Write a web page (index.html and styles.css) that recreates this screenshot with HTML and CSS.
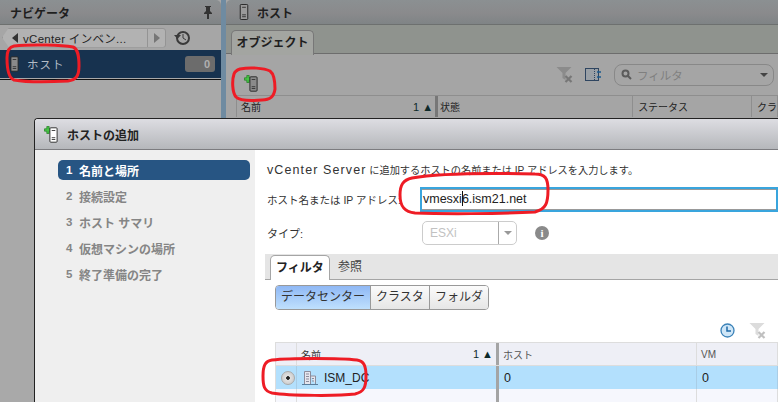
FILE: index.html
```html
<!DOCTYPE html>
<html lang="ja">
<head>
<meta charset="utf-8">
<title>ホストの追加</title>
<link rel="stylesheet" href="styles.css">
</head>
<body>
<svg width="0" height="0" class="defs">
  <defs>
    <symbol id="srv" viewBox="0 0 10 17">
      <rect x="1" y="0.5" width="8" height="16" rx="1" fill="currentColor" stroke="#222"/>
      <path d="M3 3.500h4M3 11.500h4M3 13.500h4" stroke="#333" fill="none"/>
    </symbol>
    <symbol id="plus" viewBox="0 0 8 8">
      <path d="M2.800 .5h2.400v2.300h2.300v2.400H5.200v2.300H2.800V5.200H.5V2.800h2.300z" fill="#46c446" stroke="#1f7d1f" stroke-width=".7"/>
    </symbol>
    <symbol id="funnel" viewBox="0 0 17 17">
      <path d="M0.500 1h15l-6 6v7l-3-2V7z" fill="currentColor" opacity=".55"/>
      <path d="M9.500 10l6 6M15.500 10l-6 6" stroke="currentColor" stroke-width="2.200" fill="none"/>
    </symbol>
  </defs>
</svg>

<div class="app">
  <aside class="nav">
    <header class="pane-head">
      <span class="pane-title">ナビゲータ</span>
      <svg class="pin" width="10" height="13" viewBox="0 0 10 13"><path d="M2 0h6v1H7v4l2 2v1H6v5H4V8H1V7l2-2V1H2z" fill="#333"/></svg>
    </header>
    <div class="crumbs">
      <div class="crumb">
        <span class="arrow-left"></span>
        <span class="crumb-text">vCenter インベン...</span>
        <span class="crumb-next"><span class="arrow-right"></span></span>
      </div>
      <svg class="history" width="17" height="16" viewBox="0 0 17 16"><circle cx="9" cy="8" r="6" fill="none" stroke="#3a3a3a" stroke-width="2"/><path d="M0 5l3.500 4L7 5z" fill="#3a3a3a"/><path d="M9 4v4l3 2" stroke="#3a3a3a" fill="none"/></svg>
    </div>
    <div class="nav-item">
      <svg class="ico-srv" width="9" height="16"><use href="#srv"/></svg>
      <span class="nav-label">ホスト</span>
      <span class="count">0</span>
    </div>
  </aside>
  <div class="splitter"></div>
  <main class="work">
    <header class="pane-head work-head">
      <svg class="ico-work" width="10" height="16"><use href="#srv"/></svg>
      <span class="pane-title">ホスト</span>
    </header>
    <div class="tabs"><span class="tab-object">オブジェクト</span></div>
    <div class="objects">
      <div class="toolbar">
        <span class="add-host">
          <svg class="add-plus" width="8" height="8"><use href="#plus"/></svg>
          <svg class="add-srv" width="9" height="16"><use href="#srv"/></svg>
        </span>
        <svg class="ico-funnel" width="17" height="17"><use href="#funnel"/></svg>
        <svg class="ico-cols" width="17" height="14" viewBox="0 0 17 14"><rect x=".5" y=".5" width="13" height="12" fill="#9aa0a6" stroke="#2f4560"/><path d="M9.500 1v12" stroke="#2f4560" stroke-dasharray="1 1"/><path d="M16 4h-4M16 9h-4" stroke="#1b5b8f" stroke-width="1.500"/></svg>
        <div class="search">
          <svg width="11" height="11" viewBox="0 0 11 11"><circle cx="4.500" cy="4.500" r="3" fill="none" stroke="#5c5c5c" stroke-width="2"/><path d="M7 7l3 3" stroke="#5c5c5c" stroke-width="2"/></svg>
          <span class="search-text">フィルタ</span>
          <span class="search-caret"></span>
        </div>
      </div>
      <div class="obj-cols">
        <span class="oc oc-name">名前<em>1 ▲</em></span>
        <span class="oc oc-state">状態</span>
        <span class="oc oc-status">ステータス</span>
        <span class="oc oc-cl">クラ</span>
      </div>
    </div>
  </main>
</div>

<section class="dialog">
  <header class="dlg-head">
    <span class="add-host">
      <svg class="add-plus" width="8" height="8"><use href="#plus"/></svg>
      <svg class="add-srv light" width="9" height="16"><use href="#srv"/></svg>
    </span>
    <span class="dlg-title">ホストの追加</span>
  </header>
  <div class="dlg-body">
    <ol class="steps">
      <li class="step on"><b>1</b>名前と場所</li>
      <li class="step"><b>2</b>接続設定</li>
      <li class="step"><b>3</b>ホスト サマリ</li>
      <li class="step"><b>4</b>仮想マシンの場所</li>
      <li class="step"><b>5</b>終了準備の完了</li>
    </ol>
    <div class="form">
      <p class="lead"><span class="lat">vCenter Server</span> に追加するホストの名前または IP アドレスを入力します。</p>
      <div class="row-host">
        <label class="lbl">ホスト名または IP アドレス:</label>
        <div class="host-input">vmesxi<i class="cursor"></i>6.ism21.net</div>
      </div>
      <div class="row-type">
        <label class="lbl lbl-type">タイプ:</label>
        <div class="select"><span class="sel-val">ESXi</span><span class="sel-btn"><span class="search-caret light"></span></span></div>
        <span class="info">i</span>
      </div>
      <div class="tabbar">
        <span class="t t-on">フィルタ</span>
        <span class="t">参照</span>
      </div>
      <div class="seg">
        <span class="seg-b seg-on">データセンター</span>
        <span class="seg-b">クラスタ</span>
        <span class="seg-b">フォルダ</span>
      </div>
      <div class="grid-tools">
        <svg width="15" height="15" viewBox="0 0 15 15"><circle cx="7.500" cy="7.500" r="6.500" fill="#cfe6f7" stroke="#3b82b8" stroke-width="1.300"/><path d="M7 3.500V8h4" fill="none" stroke="#1e6aa8" stroke-width="1.500"/></svg>
        <svg class="grid-funnel" width="17" height="17"><use href="#funnel"/></svg>
      </div>
      <div class="grid">
        <div class="g-row g-head">
          <span class="g g0"></span>
          <span class="g g1">名前<em>1 ▲</em></span>
          <span class="g g2">ホスト</span>
          <span class="g g3">VM</span>
        </div>
        <div class="g-row g-sel">
          <span class="g g0"><span class="radio"></span></span>
          <span class="g g1">
            <svg width="16" height="15" viewBox="0 0 16 15"><path d="M2.500 14V1.500h6V14M8.500 6h5V14" fill="#e6e6ee" stroke="#8d8d9c"/><path d="M4 4h3M4 6.500h3M4 9h3M4 11.500h3M10 8.500h2M10 11h2" stroke="#8d8d9c"/><path d="M0 14.500h16" stroke="#5b7f9e"/></svg>
            ISM_DC
          </span>
          <span class="g g2">0</span>
          <span class="g g3">0</span>
        </div>
        <div class="g-row g-empty">
          <span class="g g0"></span><span class="g g1"></span><span class="g g2"></span><span class="g g3"></span>
        </div>
      </div>
    </div>
  </div>
</section>

<svg class="marks" width="778" height="402" viewBox="0 0 778 402">
  <g fill="none" stroke="#ee1c25" stroke-width="3" stroke-linejoin="round">
    <path d="M14 46C32 44 62 45 73 47C78 49 79 56 79 66C79 76 76 80 68 81C50 82 25 82 14 80C9 78 7 70 7 58C7 51 9 47 14 46Z"/>
    <path d="M240 69C250 67 264 68 270 71C274 74 275 82 275 89C274 97 270 100 262 100C250 101 240 101 236 97C232 92 232 80 234 74C235 71 237 70 240 69Z"/>
    <path d="M412 178C440 173 490 173 535 174C545 174 548 178 548 190C548 203 546 209 535 212C500 214 440 214 415 213C404 212 400 206 400 195C400 185 403 180 412 178Z"/>
    <path d="M272 360C290 358 340 358 357 360C364 361 366 366 366 376C366 387 364 392 355 394C340 396 290 396 272 393C264 391 263 386 263 376C263 366 265 361 272 360Z"/>
  </g>
</svg>
</body>
</html>
```
FILE: styles.css
```css
* { box-sizing: border-box; }
html, body { margin: 0; padding: 0; }
body {
  width: 778px; height: 402px; overflow: hidden; position: relative;
  background: #a7a7a7; color: #222;
  font: 12px "Liberation Sans", "Noto Sans CJK JP", sans-serif;
}
.defs { position: absolute; }
em { font-style: normal; }
.app { display: flex; height: 402px; }
.nav { width: 221px; flex: none; background: #a9a9a9; border-top-right-radius: 5px; overflow: hidden; }
.splitter { width: 5px; flex: none; background: #6f8ba1; }
.work { flex: 1; min-width: 0; background: #a5a5a5; border-top-left-radius: 5px; overflow: hidden; }

.pane-head {
  height: 25px; display: flex; align-items: center; padding: 0 8px 0 10px;
  background: linear-gradient(#8b9092, #8a8a8c 55%, #7f8486);
  border-bottom: 1px solid #6d706f;
}
.pane-title { font-weight: 700; font-size: 12px; color: #1f1f1f; }
.pin { margin-left: auto; }

.crumbs { height: 25px; display: flex; align-items: center; padding-left: 2px; background: #a6a6a6; }
.crumb {
  width: 164px; height: 20px; display: flex; align-items: center; position: relative;
  background: #b2b2b2; border: 1px solid #949494; border-radius: 3px; padding-left: 9px;
  clip-path: polygon(7px 0, 100% 0, 100% 100%, 7px 100%, 0 50%);
}
.arrow-left { width: 0; height: 0; border: 5px solid transparent; border-right: 6px solid #333; border-left: 0; }
.crumb-text { margin-left: 5px; font-size: 11.500px; color: #1f1f1f; white-space: nowrap; width: 128px; letter-spacing: .3px; }
.crumb-next { height: 18px; width: 18px; border-left: 1px solid #949494; display: flex; align-items: center; justify-content: center; }
.arrow-right { width: 0; height: 0; border: 5px solid transparent; border-left: 6px solid #767676; border-right: 0; }
.history { margin-left: 8px; }

.nav-item {
  height: 28px; display: flex; align-items: center; padding: 0 6px 0 10px;
  background: #17324f; box-shadow: 0 1px 0 #a9a9a9, 0 2px 0 #111;
}
.ico-srv { color: #8a8a8a; }
.nav-label { margin-left: 8px; color: #b3bcc6; font-size: 11.500px; letter-spacing: 1px; }
.count {
  margin-left: auto; width: 30px; height: 16px; border-radius: 3px;
  background: #6c6c6c; color: #b0b0b0; font-weight: 700; font-size: 11px;
  text-align: right; padding-right: 5px; line-height: 16px;
}

.work-head { padding-left: 13px; gap: 8px; }
.ico-work { color: #9a9a9a; }
.tabs { height: 29px; background: #8f938e; border-bottom: 1px solid #6d6d6d; padding: 5px 0 0 5px; display: flex; }
.tab-object {
  width: 83px; height: 25px; background: #a3a5a1; border: 1px solid #777; border-bottom: 0;
  border-radius: 5px 5px 0 0; font-weight: 700; text-align: center; line-height: 24px; color: #1f1f1f;
}
.objects { padding: 0 0 0 10px; }
.toolbar { height: 41px; display: flex; align-items: center; padding-right: 4px; }
.add-host { position: relative; display: block; width: 14px; height: 17px; flex: none; }
.add-plus { position: absolute; left: 0; top: 0; }
.add-srv { position: absolute; right: 0; bottom: 0; color: #8a8a8a; }
.add-srv.light { color: #fff; }
.toolbar .add-host { margin: 18px 0 0 8px; }
.ico-funnel { margin-left: 298px; color: #777; }
.ico-cols { margin-left: 12px; }
.search {
  margin-left: 12px; width: 160px; height: 22px; border: 1px solid #888; border-radius: 8px;
  display: flex; align-items: center; padding: 0 5px 0 6px; gap: 5px;
}
.search-text { color: #7f7f7f; font-size: 11.500px; }
.search-caret { margin-left: auto; width: 0; height: 0; border: 4px solid transparent; border-top: 4px solid #444; border-bottom: 0; }
.search-caret.light { border-top-color: #999; margin: 0; }
.obj-cols { height: 22px; display: flex; border-top: 1px solid #8e8e8e; border-left: 1px solid #8e8e8e; font-size: 10px; }
.oc { display: flex; align-items: center; padding-left: 5px; border-right: 1px solid #8e8e8e; color: #222; white-space: nowrap; }
.oc-name { width: 203px; justify-content: space-between; padding: 0 2px 0 4px; border-right: 3px solid #777; }
.oc-name em { color: #0e2a2a; font-size: 11px; }
.oc-state { width: 197px; padding-left: 2px; }
.oc-status { width: 120px; }
.oc-cl { flex: 1; }

.dialog {
  position: absolute; left: 34px; top: 118px; width: 744px; height: 284px;
  background: #fff; border: 1px solid #222; border-width: 1px 0 0 1px; border-radius: 4px 0 0 0;
  overflow: hidden;
}
.dlg-head {
  height: 31px; display: flex; align-items: center; padding-left: 9px; gap: 9px;
  background: linear-gradient(#dddde2, #b5b7bb); border-bottom: 1px solid #7c7c80;
}
.dlg-title { font-weight: 700; font-size: 12px; color: #222; }
.dlg-body { display: flex; height: 252px; }
.steps { width: 220px; flex: none; margin: 0; padding: 10px 5px 0 23px; list-style: none; background: #efefef; }
.step { height: 20px; margin-bottom: 6px; padding-left: 8px; display: flex; align-items: center; gap: 6px; font-weight: 700; color: #858585; white-space: nowrap; border-radius: 5px; }
.step b { font-size: 11.500px; width: 7px; }
.step.on { background: #275583; color: #fff; }
.form { flex: 1; min-width: 0; padding: 11px 0 0 12px; font-size: 10.500px; }
.lead { margin: 0; height: 26px; line-height: 18px; color: #333; white-space: nowrap; font-size: 10.200px; }
.lat { font-size: 12.500px; letter-spacing: 1.100px; }
.lbl { color: #333; white-space: nowrap; }
.row-host { display: flex; align-items: center; height: 25px; }
.row-host .lbl { width: 153px; flex: none; }
.host-input {
  flex: 1; height: 25px; border: 2px solid #39a5dd; box-shadow: inset 0 1px 0 #999, inset 0 -1px 0 #999;
  padding-left: 1px; line-height: 21px; font-size: 12.500px; color: #222; background: #fff; white-space: nowrap;
}
.cursor { display: inline-block; width: 1px; height: 15px; background: #111; vertical-align: -3px; margin: 0 -1px 0 0; }
.row-type { display: flex; align-items: center; height: 24px; margin-top: 9px; }
.lbl-type { width: 155px; flex: none; font-size: 11px; }
.select { width: 95px; height: 24px; border: 1px solid #ccc; border-radius: 5px; display: flex; align-items: center; color: #c2c2c2; font-size: 12px; }
.sel-val { flex: 1; padding-left: 7px; }
.sel-btn { width: 18px; height: 100%; border-left: 1px solid #aaa; display: flex; align-items: center; justify-content: center; }
.info {
  width: 14px; height: 14px; margin-left: 18px; border-radius: 50%; background: #8a8a8a; color: #fff;
  font: 700 11px/14px "Liberation Serif", serif; text-align: center;
}
.tabbar { height: 26px; margin: 9px 0 0 -2px; background: #e5e5e5; border-bottom: 1px solid #a5a5a5; padding: 1px 0 0 5px; display: flex; font-size: 12px; }
.t { width: 54px; text-align: center; line-height: 24px; color: #444; }
.t-on { width: 60px; height: 25px; background: #fff; border: 1px solid #a5a5a5; border-bottom: 0; border-radius: 5px 5px 0 0; font-weight: 700; color: #222; }
.t-on + .t { width: 40px; }
.seg { display: flex; width: 214px; height: 25px; margin: 5px 0 0 8px; border: 1px solid #999; border-radius: 4px; overflow: hidden; font-size: 12px; }
.seg-b { flex: none; width: 59px; text-align: center; line-height: 23px; background: linear-gradient(#fbfbfb, #e6e6e6); border-left: 1px solid #999; color: #333; white-space: nowrap; }
.seg-on { width: 94px; border-left: 0; background: linear-gradient(#8fb8f5, #bfe0fd); }
.grid-tools { display: flex; justify-content: flex-end; align-items: center; height: 22px; margin-top: 9px; gap: 14px; padding-right: 12px; color: #c0c0c0; }
.grid { margin: 1px 0 0 8px; border-top: 1px solid #ddd; border-left: 1px solid #ddd; }
.g-row { display: flex; height: 23px; background: #f6f7fd; font-size: 12px; }
.g-head { background: #eeeff6; height: 23px; border-bottom: 1px solid #ddd; font-size: 10px; color: #555; }
.g-sel { background: #b3e0fd; color: #222; }
.g { display: flex; align-items: center; border-right: 1px solid #ddd; padding-left: 4px; flex: none; white-space: nowrap; }
.g0 { width: 21px; padding-left: 5px; }
.g1 { width: 202px; gap: 6px; padding-left: 5px; border-right: 3px solid #a4a4a4; }
.g-head .g1 { justify-content: space-between; padding: 0 3px 0 4px; color: #333; }
.g-head em { color: #0e2a2a; font-size: 11px; }
.g2 { width: 198px; }
.g3 { flex: 1; }
.g-sel .g { border-right-color: #a9cde6; }
.g-sel .g1 { border-right-color: #a4a4a4; }
.g-sel .g2, .g-sel .g3 { padding-left: 5px; font-size: 12.500px; }
.radio { width: 14px; height: 14px; border-radius: 50%; border: 1px solid #aaa; background: radial-gradient(circle closest-side, #222 0 25%, #e2e2e2 36%, #cfcfcf); }

.marks { position: absolute; left: 0; top: 0; pointer-events: none; }
```
